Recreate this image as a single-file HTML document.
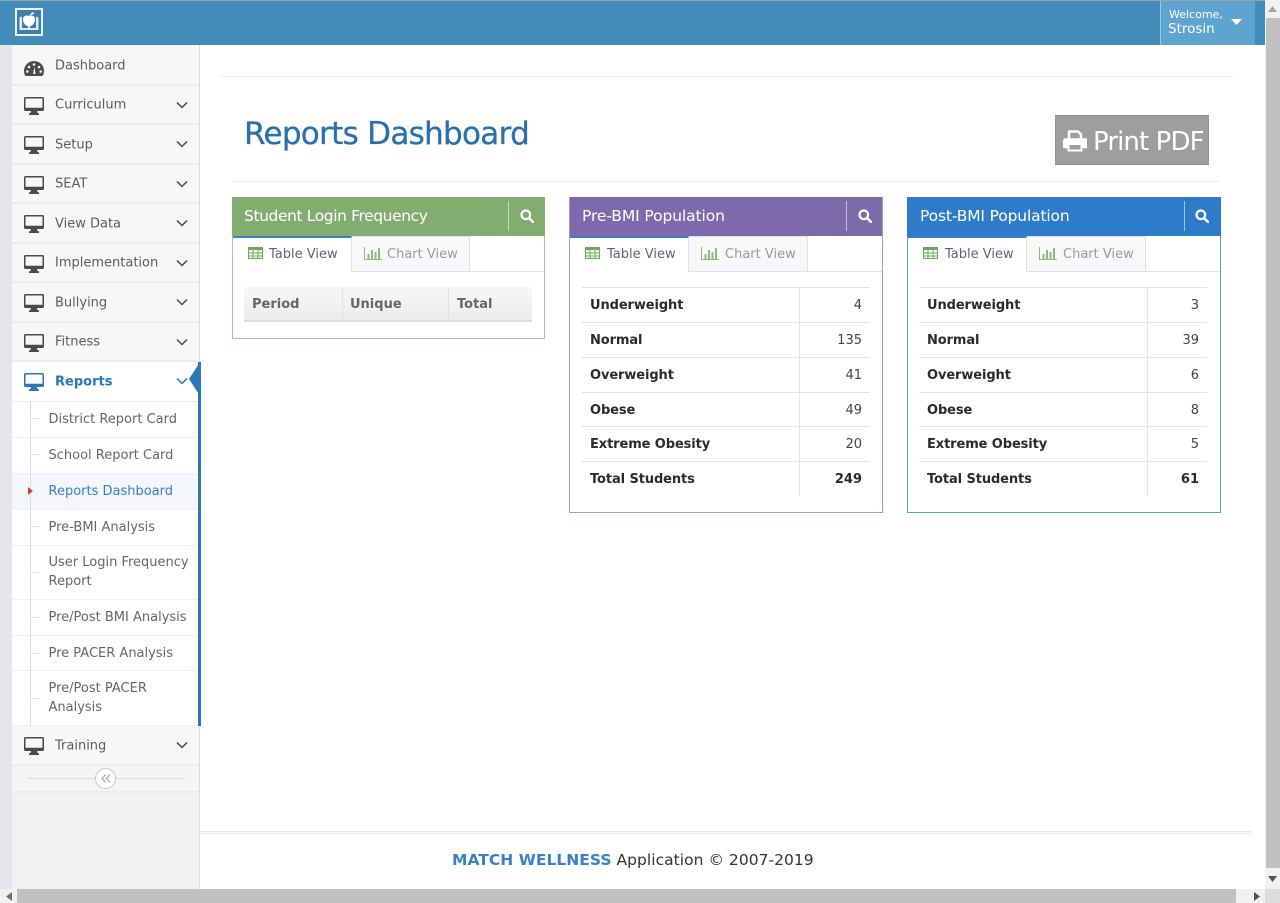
<!DOCTYPE html>
<html><head><meta charset="utf-8"><style>
*{box-sizing:border-box}
html,body{margin:0;padding:0;width:1280px;height:903px;overflow:hidden;background:#fff}
body{position:relative;font-family:"DejaVu Sans","Liberation Sans",sans-serif;color:#333}
.a{position:absolute}
.t{position:absolute;white-space:nowrap}
.row{position:absolute;left:12px;width:187px;background:#f7f7f7;border-bottom:2px solid #ececec}
.row .l{position:absolute;left:43px;top:50%;transform:translateY(-50%);font-size:13px;color:#5c5c5c;white-space:nowrap}
.row.d .l{top:calc(50% + 1px)}
.row svg.m{position:absolute;left:12px;top:11px}
.row svg.c{position:absolute;left:164px;top:15px}
.sub{position:absolute;left:12px;width:186px;background:#fff;border-bottom:1px solid #f0f0f0;font-size:13px;color:#666;line-height:19px;padding-left:36.500px;white-space:nowrap}
.panel{position:absolute;top:197px;width:314px;background:#fff}
.head{position:absolute;left:-1px;top:-1px;width:314px;height:39px;color:#fff;font-size:15.500px;line-height:38px;padding-left:12px}
.sep{position:absolute;right:36px;top:4px;width:1px;height:30px;background:rgba(255,255,255,.55)}
.tabs{position:absolute;left:0;top:38px;right:0;height:36px;border-bottom:1px solid #dbe2ee}
.tab1{position:absolute;left:0;top:0;width:119px;height:36px;background:#fff;border-top:2px solid #3a80c4;border-right:1px solid #dbe2ee;font-size:13px;color:#5d6675}
.tab2{position:absolute;left:119px;top:0;width:119px;height:35px;background:#f8f8f8;border-top:1px solid #dbe2ee;border-right:1px solid #dbe2ee;font-size:13px;color:#9a9a9a}
.tr{position:absolute;width:288px;height:35px;border-top:1px solid #e3e3e3;font-size:13px;line-height:36px;color:#333}
.tr b{position:absolute;left:8px;color:#2b2b2b;letter-spacing:-.1px}
.tr span{position:absolute;right:8px;color:#444}
.vl{position:absolute;width:1px;background:#e3e3e3}
</style></head><body>
<svg width="0" height="0" style="position:absolute"><defs>
<symbol id="mon" viewBox="0 0 20 18"><path d="M1.500 0h17A1.500 1.500 0 0 1 20 1.500v11a1.500 1.500 0 0 1-1.500 1.500H13l.6 2.200H15V18H5v-1.800h1.400L7 14H1.500A1.500 1.500 0 0 1 0 12.500v-11A1.500 1.500 0 0 1 1.500 0zM1.500 1.500v9.300h17V1.500z" fill-rule="evenodd" fill="currentColor"/></symbol>
<symbol id="chev" viewBox="0 0 12 8"><path d="M1 1.500l5 5 5-5" fill="none" stroke="currentColor" stroke-width="1.500"/></symbol>
<symbol id="search" viewBox="0 0 14 14"><circle cx="5.800" cy="5.800" r="4.300" fill="none" stroke="#fff" stroke-width="2.200"/><path d="M9 9l4 4" stroke="#fff" stroke-width="2.600" stroke-linecap="round"/></symbol>
<symbol id="grid" viewBox="0 0 15 12"><rect x=".5" y=".5" width="14" height="11" fill="none" stroke="#6aaa55"/><rect x=".5" y=".5" width="14" height="2.500" fill="#6aaa55"/><path d="M5 1v10M10 1v10M1 6h13M1 9h13" stroke="#6aaa55"/></symbol>
<symbol id="bars" viewBox="0 0 18 13"><path d="M.5 0v12.500H18" fill="none" stroke="#8cbc74"/><path d="M3.500 7h2v5h-2zM7 3h2v9H7zM10.500 5h2v7h-2zM14 1h2v11h-2z" fill="#8cbc74"/></symbol>
</defs></svg>

<!-- top bar -->
<div class="a" style="left:0;top:0;width:1265px;height:45px;background:#428cb9;border-top:1px solid #9aa3aa"></div>
<div class="a" style="left:1160px;top:1px;width:95px;height:44px;background:#5ea4d0;border-left:1px solid #9cc6e0"></div>
<div class="t" style="left:1169px;top:8px;font-size:11px;color:#fff">Welcome,</div>
<div class="t" style="left:1168px;top:21px;font-size:13.500px;color:#fff">Strosin</div>
<svg class="a" style="left:1231px;top:19px" width="11" height="6"><path d="M0 0h11L5.500 6z" fill="#fff"/></svg>
<!-- logo -->
<svg class="a" style="left:15px;top:8px" width="28" height="28" viewBox="0 0 28 28"><rect x="1" y="1" width="26" height="26" fill="#3c7fae" stroke="#e8f2f8" stroke-width="2"/><path d="M4.500 9.500L7 8.500v11.500h14V8.500l2.500 1V22h-19z" fill="#dcebf4"/><path d="M14 8c2-1 6-.8 6 3.500 0 3.500-3 7-6 7s-6-3.500-6-7C8 7.200 12 7 14 8z" fill="#fff"/><path d="M14 8l3.500-4 2 1.500z" fill="#fff"/><rect x="13.200" y="18" width="1.600" height="4" fill="#fff"/></svg>

<!-- sidebar -->
<div class="a" style="left:0;top:45px;width:12px;height:844px;background:#e4e6ea"></div>
<div class="a" style="left:12px;top:45px;width:188px;height:844px;background:#f2f2f2;border-right:1px solid #dcdcdc"></div>

<div class="row d" style="top:46px;height:40px"><span class="l">Dashboard</span>
<svg class="m" style="top:15px" width="20" height="15" viewBox="0 0 20 15"><path d="M10 0a10 10 0 0 1 10 10c0 2-.5 3.600-1.500 5H1.500C.5 13.600 0 12 0 10A10 10 0 0 1 10 0z" fill="#4a4a4a"/><circle cx="5" cy="6" r="1.300" fill="#f7f7f7"/><circle cx="10" cy="3.500" r="1.300" fill="#f7f7f7"/><circle cx="15" cy="6" r="1.300" fill="#f7f7f7"/><circle cx="3.300" cy="10.500" r="1.300" fill="#f7f7f7"/><circle cx="16.700" cy="10.500" r="1.300" fill="#f7f7f7"/><path d="M9 13l1.500-7 1 7z" fill="#f7f7f7"/></svg></div>

<div class="row" style="top:86px;height:39px;color:#4a4a4a"><span class="l">Curriculum</span><svg class="m" width="20" height="18"><use href="#mon"/></svg><svg class="c" width="12" height="8"><use href="#chev"/></svg></div>
<div class="row d" style="top:125px;height:40px;color:#4a4a4a"><span class="l">Setup</span><svg class="m" width="20" height="18"><use href="#mon"/></svg><svg class="c" width="12" height="8"><use href="#chev"/></svg></div>
<div class="row" style="top:165px;height:39px;color:#4a4a4a"><span class="l">SEAT</span><svg class="m" width="20" height="18"><use href="#mon"/></svg><svg class="c" width="12" height="8"><use href="#chev"/></svg></div>
<div class="row d" style="top:204px;height:40px;color:#4a4a4a"><span class="l">View Data</span><svg class="m" width="20" height="18"><use href="#mon"/></svg><svg class="c" width="12" height="8"><use href="#chev"/></svg></div>
<div class="row" style="top:244px;height:39px;color:#4a4a4a"><span class="l">Implementation</span><svg class="m" width="20" height="18"><use href="#mon"/></svg><svg class="c" width="12" height="8"><use href="#chev"/></svg></div>
<div class="row d" style="top:283px;height:40px;color:#4a4a4a"><span class="l">Bullying</span><svg class="m" width="20" height="18"><use href="#mon"/></svg><svg class="c" width="12" height="8"><use href="#chev"/></svg></div>
<div class="row" style="top:323px;height:39px;color:#4a4a4a"><span class="l">Fitness</span><svg class="m" width="20" height="18"><use href="#mon"/></svg><svg class="c" width="12" height="8"><use href="#chev"/></svg></div>
<div class="row" style="top:362px;height:40px;background:#fff;color:#2c77b8;border-bottom:1px solid #ececec"><span class="l" style="color:#2c77b8;font-weight:bold">Reports</span><svg class="m" width="20" height="18"><use href="#mon"/></svg><svg class="c" width="12" height="8"><use href="#chev"/></svg></div>

<div class="sub" style="top:402px;height:36px;padding-top:8px">District Report Card</div>
<div class="sub" style="top:438px;height:36px;padding-top:8px">School Report Card</div>
<div class="sub" style="top:474px;height:36px;padding-top:8px;background:#f3f6fa;color:#3a7fc0">Reports Dashboard</div>
<div class="sub" style="top:510px;height:36px;padding-top:8px">Pre-BMI Analysis</div>
<div class="sub" style="top:546px;height:54px;padding-top:7px">User Login Frequency<br>Report</div>
<div class="sub" style="top:600px;height:36px;padding-top:8px">Pre/Post BMI Analysis</div>
<div class="sub" style="top:636px;height:35px;padding-top:8px">Pre PACER Analysis</div>
<div class="sub" style="top:671px;height:55px;padding-top:8px">Pre/Post PACER<br>Analysis</div>
<div class="a" style="left:30px;top:402px;width:1px;height:324px;background:#cfe0ee"></div>
<div class="a" style="left:31px;top:418px;width:8px;height:1px;background:#cfe0ee"></div>
<div class="a" style="left:31px;top:454px;width:8px;height:1px;background:#cfe0ee"></div>
<div class="a" style="left:31px;top:526px;width:8px;height:1px;background:#cfe0ee"></div>
<div class="a" style="left:31px;top:572px;width:8px;height:1px;background:#cfe0ee"></div>
<div class="a" style="left:31px;top:617px;width:8px;height:1px;background:#cfe0ee"></div>
<div class="a" style="left:31px;top:653px;width:8px;height:1px;background:#cfe0ee"></div>
<div class="a" style="left:31px;top:698px;width:8px;height:1px;background:#cfe0ee"></div>
<svg class="a" style="left:28px;top:487px" width="5" height="8"><path d="M0 0l5 4-5 4z" fill="#c9492c"/></svg>
<!-- active bar -->
<div class="a" style="left:198px;top:362px;width:3px;height:364px;background:#2c77b8"></div>
<svg class="a" style="left:189px;top:362px" width="11" height="34"><path d="M11 0v34L0 17z" fill="#2c77b8"/></svg>

<div class="row d" style="top:726px;height:40px;color:#4a4a4a"><span class="l">Training</span><svg class="m" width="20" height="18"><use href="#mon"/></svg><svg class="c" width="12" height="8"><use href="#chev"/></svg></div>
<div class="a" style="left:12px;top:766px;width:187px;height:27px;background:#f5f5f5;border-bottom:2px solid #ececec"></div>
<div class="a" style="left:27px;top:778px;width:157px;height:1px;background:#dcdcdc"></div>
<div class="a" style="left:95px;top:768px;width:21px;height:21px;border-radius:50%;background:#fff;border:1px solid #c8c8c8"></div>
<svg class="a" style="left:101px;top:774px" width="10" height="9"><path d="M4.500 .5L1 4.500l3.500 4M9 .5L5.500 4.500 9 8.500" fill="none" stroke="#9a9a9a"/></svg>

<!-- main -->
<div class="a" style="left:220px;top:76px;width:1013px;height:1px;background:#f0f0f0"></div>
<div class="t" style="left:244px;top:116px;font-size:31px;color:#2a70ad;letter-spacing:-.7px;-webkit-text-stroke:.3px #2a70ad">Reports Dashboard</div>
<div class="a" style="left:1055px;top:115px;width:154px;height:50px;background:#9e9e9e;border:1px solid #8f8f8f"></div>
<svg class="a" style="left:1063px;top:130px" width="24" height="22" viewBox="0 0 24 22"><path d="M6 9V1.500h9l3 3V9M1 9.500h22V17h-4M5 17H1V9.500" fill="none" stroke="#fff" stroke-width="2.400" stroke-linejoin="round"/><rect x="1" y="10" width="22" height="6" fill="#fff"/><rect x="5.500" y="14" width="13" height="6.500" fill="#9e9e9e" stroke="#fff" stroke-width="2"/></svg>
<div class="t" style="left:1093px;top:127px;font-size:26px;color:#fff;letter-spacing:-.9px">Print PDF</div>
<div class="a" style="left:232px;top:181px;width:988px;height:1px;background:#eeeeee"></div>

<!-- Panel 1 -->
<div class="panel" style="left:232px;width:313px;height:142px;border:1px solid #a7c99a">
<div class="head" style="width:313px;background:#82ad70;letter-spacing:-.4px">Student Login Frequency<div class="sep"></div><svg class="a" style="left:288px;top:12px" width="14" height="14"><use href="#search"/></svg></div>
<div class="tabs"><div class="tab1"><svg class="a" style="left:15px;top:9px" width="15" height="12"><use href="#grid"/></svg><span class="t" style="left:36px;top:9px">Table View</span></div><div class="tab2" style="width:118px"><svg class="a" style="left:12px;top:10px" width="18" height="13"><use href="#bars"/></svg><span class="t" style="left:35px;top:10px">Chart View</span></div></div>
<div class="a" style="left:11px;top:89px;width:288px;height:35px;background:linear-gradient(#f7f7f7,#ececec);border-bottom:2px solid #dedede;font-size:13px;font-weight:bold;color:#666;line-height:36px">
<span class="t" style="left:8px">Period</span><span class="t" style="left:106px">Unique</span><span class="t" style="left:213px">Total</span>
<div class="a" style="left:98px;top:0;width:1px;height:33px;background:#e2e2e2"></div><div class="a" style="left:204px;top:0;width:1px;height:33px;background:#e2e2e2"></div></div>
</div>

<!-- Panel 2 -->
<div class="panel" style="left:569px;height:316px;border:1px solid #a498c9">
<div class="head" style="left:0;width:312px;background:#7c6aaa;letter-spacing:-.1px">Pre-BMI Population<div class="sep" style="right:35px"></div><svg class="a" style="left:288px;top:12px" width="14" height="14"><use href="#search"/></svg></div>
<div class="tabs"><div class="tab1"><svg class="a" style="left:15px;top:9px" width="15" height="12"><use href="#grid"/></svg><span class="t" style="left:37px;top:9px">Table View</span></div><div class="tab2"><svg class="a" style="left:12px;top:10px" width="18" height="13"><use href="#bars"/></svg><span class="t" style="left:36px;top:10px">Chart View</span></div></div>
<div class="tr" style="top:89px;left:12px"><b>Underweight</b><span>4</span></div>
<div class="tr" style="top:124px;left:12px"><b>Normal</b><span>135</span></div>
<div class="tr" style="top:159px;left:12px"><b>Overweight</b><span>41</span></div>
<div class="tr" style="top:194px;left:12px"><b>Obese</b><span>49</span></div>
<div class="tr" style="top:228px;left:12px"><b>Extreme Obesity</b><span>20</span></div>
<div class="tr" style="top:263px;left:12px"><b>Total Students</b><span style="font-weight:bold;color:#2b2b2b">249</span></div>
<div class="vl" style="left:229px;top:89px;height:209px"></div>
</div>

<!-- Panel 3 -->
<div class="panel" style="left:907px;height:316px;border:1px solid #5a9bd8">
<div class="head" style="background:#2e7acb;letter-spacing:-.15px;padding-left:13px">Post-BMI Population<div class="sep"></div><svg class="a" style="left:288px;top:12px" width="14" height="14"><use href="#search"/></svg></div>
<div class="tabs"><div class="tab1"><svg class="a" style="left:15px;top:9px" width="15" height="12"><use href="#grid"/></svg><span class="t" style="left:37px;top:9px">Table View</span></div><div class="tab2"><svg class="a" style="left:12px;top:10px" width="18" height="13"><use href="#bars"/></svg><span class="t" style="left:36px;top:10px">Chart View</span></div></div>
<div class="tr" style="top:89px;left:11px"><b>Underweight</b><span>3</span></div>
<div class="tr" style="top:124px;left:11px"><b>Normal</b><span>39</span></div>
<div class="tr" style="top:159px;left:11px"><b>Overweight</b><span>6</span></div>
<div class="tr" style="top:194px;left:11px"><b>Obese</b><span>8</span></div>
<div class="tr" style="top:228px;left:11px"><b>Extreme Obesity</b><span>5</span></div>
<div class="tr" style="top:263px;left:11px"><b>Total Students</b><span style="font-weight:bold;color:#2b2b2b">61</span></div>
<div class="vl" style="left:239px;top:89px;height:209px"></div>
</div>

<!-- footer -->
<div class="a" style="left:200px;top:831px;width:1052px;height:3px;border-top:1px solid #e8e8e8;border-bottom:1px solid #e8e8e8"></div>
<div class="t" style="left:452px;top:851px;font-size:15.500px;color:#333;letter-spacing:.03px"><b style="color:#3a82c4">MATCH WELLNESS</b> Application © 2007-2019</div>

<!-- scrollbars -->
<div class="a" style="left:1265px;top:0;width:15px;height:903px;background:#f1f1f1"></div>
<div class="a" style="left:1266px;top:18px;width:14px;height:850px;background:#c1c1c1"></div>
<svg class="a" style="left:1268px;top:6px" width="9" height="6"><path d="M4.500 0L9 6H0z" fill="#a3a3a3"/></svg>
<svg class="a" style="left:1268px;top:876px" width="9" height="6"><path d="M0 0h9L4.500 6z" fill="#505050"/></svg>
<div class="a" style="left:0;top:889px;width:1280px;height:14px;background:#f1f1f1"></div>
<div class="a" style="left:17px;top:889px;width:1219px;height:14px;background:#c1c1c1"></div>
<svg class="a" style="left:6px;top:892px" width="6" height="9"><path d="M6 0v9L0 4.500z" fill="#707070"/></svg>
<svg class="a" style="left:1254px;top:892px" width="6" height="9"><path d="M0 0v9l6-4.500z" fill="#505050"/></svg>
<div class="a" style="left:1265px;top:889px;width:15px;height:14px;background:#dcdcdc"></div>
</body></html>
